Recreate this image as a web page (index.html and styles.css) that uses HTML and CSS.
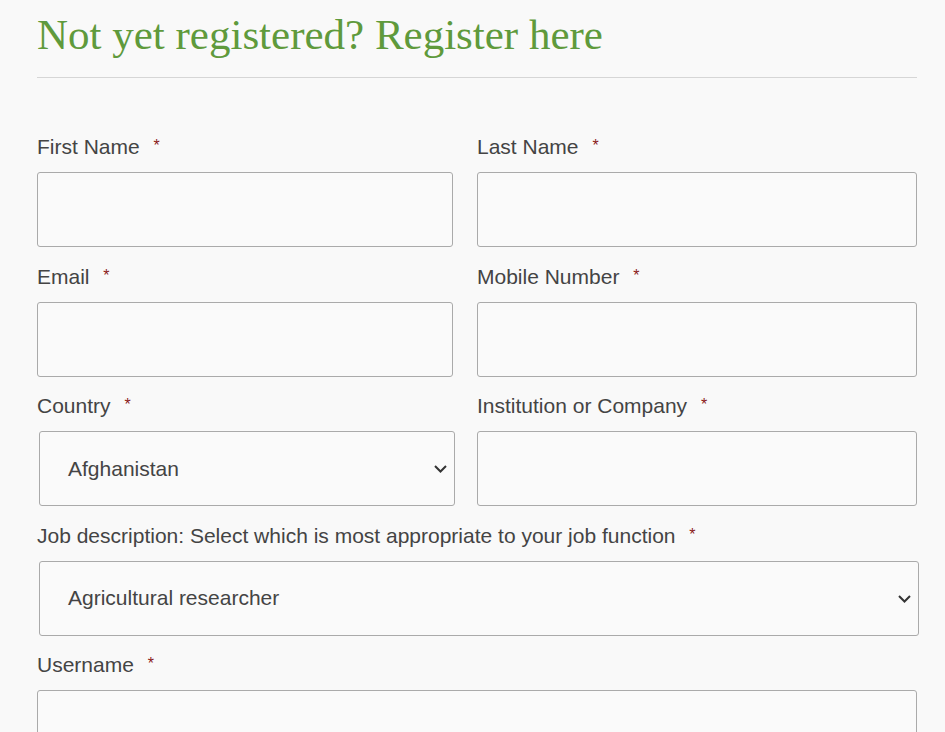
FILE: index.html
```html
<!DOCTYPE html>
<html lang="en">
<head>
<meta charset="utf-8">
<title>Register</title>
<link rel="stylesheet" href="styles.css">
</head>
<body>
<div class="page">
  <h1 class="title">Not yet registered? Register here</h1>
  <hr class="rule">
  <form class="form">
    <div class="field left">
      <label class="label">First Name <span class="req">*</span></label>
      <input class="input" type="text">
    </div>
    <div class="field">
      <label class="label">Last Name <span class="req">*</span></label>
      <input class="input" type="text">
    </div>
    <div class="field left">
      <label class="label">Email <span class="req">*</span></label>
      <input class="input" type="text">
    </div>
    <div class="field">
      <label class="label">Mobile Number <span class="req">*</span></label>
      <input class="input" type="text">
    </div>
    <div class="field left">
      <label class="label">Country <span class="req">*</span></label>
      <div class="select shifted">
        <span>Afghanistan</span>
        <svg class="chev" viewBox="0 0 13 8" width="13" height="8"><path d="M1 1 L6.5 6.5 L12 1" fill="none" stroke="#333" stroke-width="2"/></svg>
      </div>
    </div>
    <div class="field">
      <label class="label">Institution or Company <span class="req">*</span></label>
      <input class="input" type="text">
    </div>
    <div class="field full">
      <label class="label">Job description: Select which is most appropriate to your job function <span class="req">*</span></label>
      <div class="select shifted">
        <span>Agricultural researcher</span>
        <svg class="chev" viewBox="0 0 13 8" width="13" height="8"><path d="M1 1 L6.5 6.5 L12 1" fill="none" stroke="#333" stroke-width="2"/></svg>
      </div>
    </div>
    <div class="field full">
      <label class="label">Username <span class="req">*</span></label>
      <input class="input" type="text">
    </div>
  </form>
</div>
</body>
</html>
```
FILE: styles.css
```css
html, body {
  margin: 0;
  padding: 0;
  background: #f9f9f9;
}
.page {
  width: 880px;
  margin-left: 37px;
  font-family: "Liberation Sans", Arial, sans-serif;
  color: #444;
}
.title {
  margin: 0;
  padding-top: 11px;
  font-family: "Liberation Serif", Georgia, serif;
  font-weight: normal;
  font-size: 43px;
  line-height: 48px;
  color: #5f9a3c;
}
.rule {
  border: none;
  border-top: 1px solid #d6d6d6;
  margin: 18px 0 0 0;
}
.form {
  display: grid;
  grid-template-columns: 440px 440px;
  padding-top: 57px;
}
.field {
  display: flex;
  flex-direction: column;
  margin-bottom: 17.5px;
}
.field.left {
  padding-right: 24px;
}
.field.full {
  grid-column: 1 / 3;
}
.label {
  font-size: 21px;
  line-height: 24px;
  margin-bottom: 13px;
  color: #444;
}
.req {
  color: #8b1a1a;
  font-size: 16px;
  line-height: 0;
  margin-left: 8px;
  vertical-align: 3px;
}
.input {
  box-sizing: border-box;
  height: 75px;
  border: 1px solid #aaa;
  border-radius: 3px;
  background: #fafafa;
  margin: 0;
}
.select {
  box-sizing: border-box;
  height: 75px;
  border: 1px solid #aaa;
  border-radius: 3px;
  background: #fafafa;
  display: flex;
  align-items: center;
  justify-content: space-between;
  padding: 0 7px 0 28px;
  font-size: 21px;
  color: #444;
}
.select.shifted {
  margin-left: 2px;
  margin-right: -2px;
}
.chev {
  margin-top: 1px;
}
```
